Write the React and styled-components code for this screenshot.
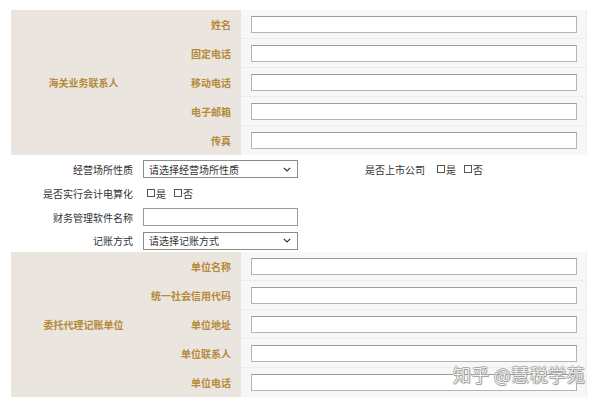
import React from 'react';
import styled, { createGlobalStyle } from 'styled-components';

const GlobalStyle = createGlobalStyle`
  html, body {
    margin: 0;
    padding: 0;
    background: #fff;
  }
  body {
    font-family: "Microsoft YaHei", "Noto Sans CJK SC", "Noto Sans", sans-serif;
    font-size: 10px;
    color: #333;
  }
`

const Page = styled.div`
  position: relative;
  width: 600px;
  height: 402px;
  padding: 10px 13px 0 11px;
  box-sizing: border-box;
  overflow: hidden;
`

const Table = styled.div`
  display: grid;
  grid-template-columns: 145px 85px 1fr;
  grid-auto-rows: 29px;
  border-right: 1px solid #eeeeee;
`

const GroupCell = styled.div`
  grid-row: 1 / span ${p => p.rows};
  grid-column: 1;
  background: #ebe5df;
  display: flex;
  align-items: center;
  justify-content: center;
  padding-left: ${p => p.shift || 0}px;
  color: #b58a3b;
  font-weight: bold;
  font-size: 10px;
`

const LabelCell = styled.div`
  grid-column: 2;
  background: #ebe5df;
  display: flex;
  align-items: center;
  justify-content: flex-end;
  padding-right: 10px;
  color: #b58a3b;
  font-weight: bold;
  font-size: 10px;
  white-space: nowrap;
`

const InputCell = styled.div`
  grid-column: 3;
  background: #f7f7f7;
  border-bottom: 1px solid #ececec;
  display: flex;
  align-items: center;
  padding: 0 9px 0 10px;

  &:last-child {
    border-bottom: none;
  }
`

const TextBox = styled.div`
  flex: 1;
  height: 17px;
  box-sizing: border-box;
  background: #fff;
  border: 1px solid #b4b4b4;
  border-top-color: #9c9c9c;
`

const Middle = styled.div`
  padding: 2px 0 0;
  display: flex;
  flex-direction: column;
`

const Row = styled.div`
  height: 24px;
  display: flex;
  align-items: center;

  &:last-child {
    height: 23px;
  }
`

const RowLabel = styled.div`
  width: ${p => p.width || 122}px;
  margin-left: ${p => p.offset || 0}px;
  text-align: right;
  padding-right: ${p => p.gap ?? 10}px;
  box-sizing: content-box;
  white-space: nowrap;
  color: #333;
`

const Select = styled.div`
  width: 155px;
  height: 18px;
  box-sizing: border-box;
  border: 1px solid #8a8a8a;
  background: #fff;
  display: flex;
  align-items: center;
  justify-content: space-between;
  padding: 0 6px 0 5px;
  color: #333;
  white-space: nowrap;
`

const Field = styled.div`
  width: 155px;
  height: 18px;
  box-sizing: border-box;
  border: 1px solid #9a9a9a;
  background: #fff;
`

const Choice = styled.label`
  display: inline-flex;
  align-items: center;
  margin-right: 8px;
  color: #333;
`

const Box = styled.span`
  display: inline-block;
  width: 8px;
  height: 8px;
  border: 1px solid #555;
  box-sizing: border-box;
  margin-right: 1px;
`

const Watermark = styled.div`
  position: absolute;
  right: 15px;
  bottom: 15px;
  font-family: "Noto Sans CJK SC", sans-serif;
  font-weight: 300;
  font-size: 18px;
  color: #fafafa;
  letter-spacing: 0.5px;
  text-shadow: -1px 0 0 #a5a5a5, 0 -1px 0 #a5a5a5, 1px 0 0 #a5a5a5, 0 1px 0 #a5a5a5, 1px 1px 1px #8a8a8a;
`

const Chevron = () => (
  <svg width="8" height="5" viewBox="0 0 8 5">
    <polyline points="0.8,0.8 4,4 7.2,0.8" fill="none" stroke="#333" strokeWidth="1.2" />
  </svg>
)

const Section = ({ title, fields, shift }) => (
  <Table>
    <GroupCell rows={fields.length} shift={shift}>{title}</GroupCell>
    {fields.map(f => (
      <React.Fragment key={f}>
        <LabelCell>{f}</LabelCell>
        <InputCell><TextBox /></InputCell>
      </React.Fragment>
    ))}
  </Table>
)

const YesNo = () => (
  <>
    <Choice><Box />是</Choice>
    <Choice><Box />否</Choice>
  </>
)

const App = () => {
  return (
    <Page>
      <GlobalStyle />
      <Section title="海关业务联系人" fields={['姓名', '固定电话', '移动电话', '电子邮箱', '传真']} />
      <Middle>
        <Row>
          <RowLabel>经营场所性质</RowLabel>
          <Select>请选择经营场所性质<Chevron /></Select>
          <RowLabel width={57} offset={67} gap={15}>是否上市公司</RowLabel>
          <YesNo />
        </Row>
        <Row>
          <RowLabel gap={14}>是否实行会计电算化</RowLabel>
          <YesNo />
        </Row>
        <Row>
          <RowLabel>财务管理软件名称</RowLabel>
          <Field />
        </Row>
        <Row>
          <RowLabel>记账方式</RowLabel>
          <Select>请选择记账方式<Chevron /></Select>
        </Row>
      </Middle>
      <Section title="委托代理记账单位" shift={-10} fields={['单位名称', '统一社会信用代码', '单位地址', '单位联系人', '单位电话']} />
      <Watermark>知乎 @慧税学苑</Watermark>
    </Page>
  );
}

export default App;
